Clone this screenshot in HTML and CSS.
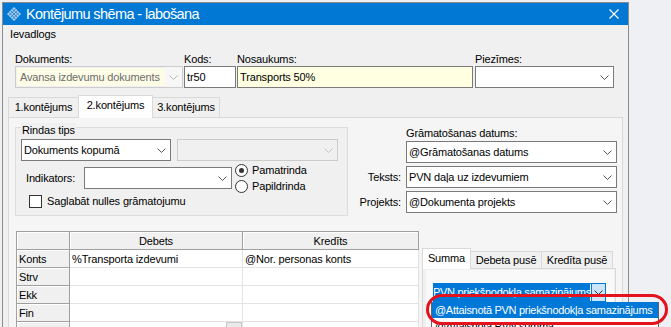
FILE: index.html
```html
<!DOCTYPE html>
<html>
<head>
<meta charset="utf-8">
<link rel="stylesheet" href="styles.css">
</head>
<body>
<div class="window">
  <div class="titlebar">
    <svg class="appicon" width="14" height="14" viewBox="0 0 14 14">
      <g transform="rotate(45 7 7)">
        <rect x="2" y="2" width="10" height="10" fill="#a9d0f2"/>
        <path d="M4.5 2v10M7 2v10M9.5 2v10M2 4.5h10M2 7h10M2 9.5h10" stroke="#2a7fc9" stroke-width="0.9"/>
      </g>
    </svg>
    <span class="title">Kontējumu shēma - labošana</span>
    <svg class="close" width="10" height="10" viewBox="0 0 10 10">
      <path d="M0.5 0.5L9.5 9.5M9.5 0.5L0.5 9.5" stroke="#fff" stroke-width="1.2"/>
    </svg>
  </div>
  <div class="menubar">Ievadlogs</div>

  <div class="fields">
    <div class="field f-doc">
      <div class="flabel">Dokuments:</div>
      <div class="combo disabled yellow"><span class="ctext">Avansa izdevumu dokuments</span><span class="arrow"><svg width="9" height="5" viewBox="0 0 9 5"><path d="M0.5 0.5L4.5 4.5L8.5 0.5" fill="none" stroke="#b5b5b5"/></svg></span></div>
    </div>
    <div class="field f-kods">
      <div class="flabel">Kods:</div>
      <div class="textbox">tr50</div>
    </div>
    <div class="field f-nos">
      <div class="flabel">Nosaukums:</div>
      <div class="textbox yellowbox">Transports 50%</div>
    </div>
    <div class="field f-piez">
      <div class="flabel">Piezīmes:</div>
      <div class="combo"><span class="ctext"></span><span class="arrow"><svg width="9" height="5" viewBox="0 0 9 5"><path d="M0.5 0.5L4.5 4.5L8.5 0.5" fill="none" stroke="#555"/></svg></span></div>
    </div>
  </div>

  <div class="tabs">
    <div class="tabstrip">
      <div class="tab t1">1.kontējums</div>
      <div class="tab t2 active">2.kontējums</div>
      <div class="tab t3">3.kontējums</div>
    </div>
    <div class="panel">
      <div class="upper">
        <div class="group">
          <div class="group-title">Rindas tips</div>
          <div class="grow r1">
            <div class="combo c-tips"><span class="ctext">Dokuments kopumā</span><span class="arrow"><svg width="9" height="5" viewBox="0 0 9 5"><path d="M0.5 0.5L4.5 4.5L8.5 0.5" fill="none" stroke="#555"/></svg></span></div>
            <div class="combo disabled c-tips2"><span class="ctext"></span><span class="arrow"><svg width="9" height="5" viewBox="0 0 9 5"><path d="M0.5 0.5L4.5 4.5L8.5 0.5" fill="none" stroke="#c4c4c4"/></svg></span></div>
          </div>
          <div class="grow r2">
            <span class="ind-label">Indikators:</span>
            <div class="combo c-ind"><span class="ctext"></span><span class="arrow"><svg width="9" height="5" viewBox="0 0 9 5"><path d="M0.5 0.5L4.5 4.5L8.5 0.5" fill="none" stroke="#555"/></svg></span></div>
            <div class="radios">
              <div class="radio-row"><span class="radio on"></span><span>Pamatrinda</span></div>
              <div class="radio-row"><span class="radio"></span><span>Papildrinda</span></div>
            </div>
          </div>
          <div class="grow r3">
            <span class="checkbox"></span><span class="chk-label">Saglabāt nulles grāmatojumu</span>
          </div>
        </div>
        <div class="rightcol">
          <div></div>
          <div class="rlabel-top">Grāmatošanas datums:</div>
          <div></div>
          <div class="combo"><span class="ctext">@Grāmatošanas datums</span><span class="arrow"><svg width="9" height="5" viewBox="0 0 9 5"><path d="M0.5 0.5L4.5 4.5L8.5 0.5" fill="none" stroke="#555"/></svg></span></div>
          <div class="rlabel">Teksts:</div>
          <div class="combo"><span class="ctext">PVN daļa uz izdevumiem</span><span class="arrow"><svg width="9" height="5" viewBox="0 0 9 5"><path d="M0.5 0.5L4.5 4.5L8.5 0.5" fill="none" stroke="#555"/></svg></span></div>
          <div class="rlabel">Projekts:</div>
          <div class="combo"><span class="ctext">@Dokumenta projekts</span><span class="arrow"><svg width="9" height="5" viewBox="0 0 9 5"><path d="M0.5 0.5L4.5 4.5L8.5 0.5" fill="none" stroke="#555"/></svg></span></div>
        </div>
      </div>

      <div class="lower">
        <table class="grid">
          <colgroup><col class="gc1"><col class="gc2"><col class="gc3"></colgroup>
          <tr><th class="corner"></th><th>Debets</th><th>Kredīts</th></tr>
          <tr><th class="rh">Konts</th><td>%Transporta izdevumi</td><td>@Nor. personas konts</td></tr>
          <tr><th class="rh">Strv</th><td></td><td></td></tr>
          <tr><th class="rh">Ekk</th><td></td><td></td></tr>
          <tr><th class="rh">Fin</th><td></td><td></td></tr>
          <tr><th class="rh"></th><td class="btncell"><span class="cellbtn"></span></td><td></td></tr>
        </table>

        <div class="subtabs">
          <div class="substrip">
            <div class="stab s1 active">Summa</div>
            <div class="stab s2">Debeta pusē</div>
            <div class="stab s3">Kredīta pusē</div>
          </div>
          <div class="subpanel">
            <div class="subpage">
              <div class="opencombo">
                <span class="sel"><span class="seltext">PVN priekšnodokļa samazinājums</span></span>
                <span class="obtn"><svg width="9" height="5" viewBox="0 0 9 5"><path d="M0.5 0.5L4.5 4.5L8.5 0.5" fill="none" stroke="#333"/></svg></span>
              </div>
            </div>
          </div>
        </div>
      </div>
    </div>
  </div>
</div>

<div class="droplist">
  <div class="ditem hl">@Attaisnotā PVN priekšnodokļa samazinājums</div>
  <div class="ditem">@Attaisnotā PVN summa</div>
</div>
<div class="ring"></div>
</body>
</html>
```

FILE: styles.css
```css
* { box-sizing: border-box; }
html, body { margin: 0; height: 100%; overflow: hidden; }
body {
  background: #eef0f4;
  font-family: "Liberation Sans", Arial, sans-serif;
  font-size: 11px;
  letter-spacing: -0.15px;
  color: #000;
  position: relative;
}

.window {
  margin: 2px 0 0 2px;
  width: 627px;
  height: 340px;
  border: 1px solid #8c8c8c;
  border-bottom: none;
  background: #f0f0f0;
}

.titlebar {
  height: 22px;
  background: #0078d4;
  display: flex;
  align-items: center;
  padding-left: 4px;
  padding-right: 9px;
  color: #fff;
}
.appicon { flex: none; }
.title {
  margin-left: 5px;
  font-size: 14.5px;
  letter-spacing: -0.6px;
}
.close { margin-left: auto; }

.menubar {
  height: 19px;
  line-height: 19px;
  padding-left: 7px;
}

.fields {
  display: flex;
  margin-top: 8px;
  padding-left: 12px;
}
.field + .field { margin-left: 1px; }
.f-doc { width: 168px; }
.f-kods { width: 52px; }
.f-nos { width: 236px; }
.f-piez { width: 139px; margin-left: 2px !important; }
.flabel { height: 14px; line-height: 14px; }

.textbox {
  height: 22px;
  border: 1px solid #7a7a7a;
  background: #fff;
  line-height: 20px;
  padding-left: 2px;
}
.yellowbox { background: #ffffe1; }

.combo {
  height: 22px;
  border: 1px solid #7a7a7a;
  background: #fff;
  display: flex;
  align-items: stretch;
}
.combo .ctext {
  flex: 1;
  line-height: 20px;
  padding-left: 2px;
  white-space: nowrap;
  overflow: hidden;
}
.combo .arrow {
  width: 17px;
  display: flex;
  align-items: center;
  justify-content: center;
}
.combo.disabled {
  border-color: #cccccc;
  background: #f0f0f0;
  color: #6d6d6d;
}
.combo.yellow .ctext { background: #fdfce6; margin: 1px 0 1px 1px; line-height: 18px; padding-left: 3px; }
.combo.yellow .arrow { background: #f7f7f7; }

/* main tabs */
.tabs { margin-top: 7px; margin-left: 5px; width: 615px; }
.tabstrip {
  display: flex;
  align-items: flex-end;
  height: 22px;
}
.tab {
  height: 20px;
  border: 1px solid #d9d9d9;
  border-bottom: none;
  background: #f0f0f0;
  text-align: center;
  line-height: 19px;
}
.tab + .tab { margin-left: -1px; }
.t1 { width: 71px; }
.t2 { width: 75px; }
.t3 { width: 68px; }
.tab.active {
  height: 23px;
  background: #fff;
  margin-bottom: -1px;
  position: relative;
  z-index: 1;
  line-height: 18px;
}

.panel {
  height: 230px;
  border: 1px solid #d9d9d9;
  background: #f5f5f5;
  padding: 9px 5px 0 6px;
}

.upper {
  display: flex;
  justify-content: space-between;
  align-items: flex-start;
}

.group {
  width: 333px;
  height: 89px;
  border: 1px solid #dcdcdc;
  background: #f0f0f0;
}
.group-title {
  margin: -5px 0 0 5px;
  padding: 0 1px;
  width: fit-content;
  line-height: 14px;
  background: #f0f0f0;
}
.grow { display: flex; align-items: center; }
.r1 { margin-top: 2px; padding-left: 5px; }
.c-tips { width: 150px; }
.c-tips2 { width: 161px; margin-left: 6px; }
.r2 { margin-top: 1px; height: 32px; padding-left: 10px; }
.ind-label { width: 58px; }
.c-ind { width: 148px; }
.radios { margin-left: 3px; display: flex; flex-direction: column; }
.radio-row { display: flex; align-items: center; height: 16px; }
.radio {
  width: 13px; height: 13px;
  border: 1px solid #333;
  border-radius: 50%;
  background: #fff;
  margin-right: 4px;
  display: flex; align-items: center; justify-content: center;
}
.radio.on::after {
  content: "";
  width: 5px; height: 5px;
  border-radius: 50%;
  background: #333;
}
.r3 { padding-left: 13px; height: 14px; }
.checkbox {
  width: 13px; height: 13px;
  border: 1px solid #333;
  background: #fff;
}
.chk-label { margin-left: 5px; }

.rightcol {
  margin-top: -1px;
  display: grid;
  grid-template-columns: auto 211px;
  row-gap: 3px;
  align-items: center;
}
.rlabel-top { height: 14px; line-height: 14px; margin-bottom: -2px; }
.rlabel { text-align: right; padding-right: 5px; }

/* lower */
.lower {
  display: flex;
  align-items: flex-start;
  margin-top: 15px;
  padding-left: 1px;
}

.grid {
  border-collapse: separate;
  border-spacing: 0;
  table-layout: fixed;
  width: 402px;
  border-left: 1px solid #a0a0a0;
  border-top: 1px solid #a0a0a0;
}
.gc1 { width: 53px; }
.gc2 { width: 173px; }
.gc3 { width: 176px; }
.grid th, .grid td {
  height: 18px;
  padding: 0 2px;
  font-weight: normal;
  white-space: nowrap;
  overflow: hidden;
}
.grid th {
  background: #f0f0f0;
  border-right: 1px solid #a0a0a0;
  border-bottom: 1px solid #a0a0a0;
  box-shadow: inset 1px 1px 0 #fff;
  text-align: center;
}
.grid th.rh { text-align: left; }
.grid td {
  background: #fff;
  border-right: 1px solid #e3e3e3;
  border-bottom: 1px solid #e3e3e3;
}
.btncell { vertical-align: top; }
.cellbtn {
  display: block;
  width: 16px;
  height: 10px;
  margin-left: auto;
  margin-right: -2px;
  border: 1px solid #c8c8c8;
  border-bottom: none;
  background: #eaeaea;
}

.subtabs { margin-left: 3px; margin-top: 17px; width: 194px; }
.substrip { display: flex; align-items: flex-end; height: 20px; }
.stab {
  height: 17px;
  border: 1px solid #d9d9d9;
  border-bottom: none;
  background: #f0f0f0;
  text-align: center;
  line-height: 16px;
}
.stab + .stab { margin-left: -1px; }
.s1 { width: 49px; }
.s2 { width: 72px; }
.s3 { width: 72px; }
.stab.active {
  height: 21px;
  background: #fff;
  margin-bottom: -1px;
  position: relative;
  z-index: 1;
  line-height: 18px;
}
.subpanel {
  height: 80px;
  border: 1px solid #d9d9d9;
  background: #f0f0f0;
  padding: 1px 1px 0 3px;
}
.subpage {
  height: 80px;
  background: #f9f9f9;
  padding: 13px 0 0 7px;
}
.opencombo {
  width: 173px;
  height: 19px;
  border: 1px solid #0078d7;
  background: #fff;
  display: flex;
}
.opencombo .sel {
  flex: 1;
  background: #0078d7;
  color: #fff;
  overflow: hidden;
  white-space: nowrap;
  line-height: 17px;
  margin-right: 1px;
  letter-spacing: -0.3px;
}
.seltext { margin-left: -1px; }
.obtn {
  width: 14px;
  background: #cce4f7;
  border-left: 1px solid #0078d7;
  display: flex; align-items: center; justify-content: center;
}

.droplist {
  position: absolute;
  left: 431px;
  top: 302px;
  width: 228px;
  height: 40px;
  background: #fff;
  border: 1px solid #646464;
  border-top: none;
  letter-spacing: -0.3px;
}
.ditem {
  height: 16px;
  line-height: 16px;
  padding-left: 3px;
  white-space: nowrap;
}
.ditem.hl { background: #0078d7; color: #fff; }

.ring {
  position: absolute;
  left: 426px;
  top: 294px;
  width: 242px;
  height: 31px;
  border: 3px solid #e3121d;
  border-radius: 16px / 50%;
}
```
